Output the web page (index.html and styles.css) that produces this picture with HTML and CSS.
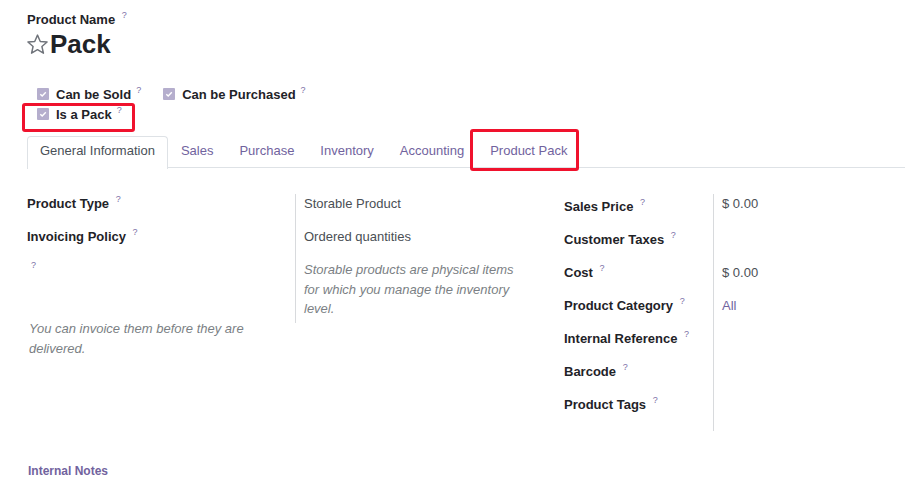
FILE: index.html
```html
<!DOCTYPE html>
<html>
<head>
<meta charset="utf-8">
<link rel="stylesheet" href="styles.css">
</head>
<body>
<div class="sheet">
  <div class="title-block">
    <div class="name-label">Product Name <sup class="q">?</sup></div>
    <h1 class="name">
      <svg class="star" viewBox="0 0 24 24" width="23" height="23"><path d="M12 2.2l2.9 6.6 7.1.6-5.4 4.7 1.6 7-6.2-3.7-6.2 3.7 1.6-7L2 9.4l7.1-.6z" fill="none" stroke="#6f737a" stroke-width="1.5" stroke-linejoin="round"/></svg>Pack
    </h1>
  </div>

  <div class="options">
    <div class="opt-row">
      <label class="opt"><span class="cb"><svg viewBox="0 0 12 12" width="12" height="12"><path d="M3.3 6.2l1.9 1.9 3.6-3.8" fill="none" stroke="#fff" stroke-width="1.4"/></svg></span>Can be Sold <sup class="q">?</sup></label>
      <label class="opt"><span class="cb"><svg viewBox="0 0 12 12" width="12" height="12"><path d="M3.3 6.2l1.9 1.9 3.6-3.8" fill="none" stroke="#fff" stroke-width="1.4"/></svg></span>Can be Purchased <sup class="q">?</sup></label>
    </div>
    <div class="opt-row">
      <label class="opt"><span class="cb"><svg viewBox="0 0 12 12" width="12" height="12"><path d="M3.3 6.2l1.9 1.9 3.6-3.8" fill="none" stroke="#fff" stroke-width="1.4"/></svg></span>Is a Pack <sup class="q">?</sup></label>
    </div>
  </div>

  <div class="tabs">
    <div class="tab active">General Information</div>
    <div class="tab">Sales</div>
    <div class="tab">Purchase</div>
    <div class="tab">Inventory</div>
    <div class="tab">Accounting</div>
    <div class="tab">Product Pack</div>
  </div>

  <div class="groups">
    <div class="group-left">
      <div class="grid left-grid">
        <div class="lbl">Product Type <sup class="q">?</sup></div>
        <div class="val">Storable Product</div>
        <div class="lbl">Invoicing Policy <sup class="q">?</sup></div>
        <div class="val">Ordered quantities</div>
        <div class="lbl empty"><sup class="q">?</sup></div>
        <div class="val help">Storable products are physical items for which you manage the inventory level.</div>
      </div>
      <div class="help below">You can invoice them before they are delivered.</div>
    </div>
    <div class="group-right">
      <div class="grid right-grid">
        <div class="lbl">Sales Price <sup class="q">?</sup></div>
        <div class="val first">$ 0.00</div>
        <div class="lbl">Customer Taxes <sup class="q">?</sup></div>
        <div class="val"></div>
        <div class="lbl">Cost <sup class="q">?</sup></div>
        <div class="val">$ 0.00</div>
        <div class="lbl">Product Category <sup class="q">?</sup></div>
        <div class="val link">All</div>
        <div class="lbl">Internal Reference <sup class="q">?</sup></div>
        <div class="val"></div>
        <div class="lbl">Barcode <sup class="q">?</sup></div>
        <div class="val"></div>
        <div class="lbl">Product Tags <sup class="q">?</sup></div>
        <div class="val last"></div>
      </div>
    </div>
  </div>

  <div class="notes">Internal Notes</div>

  <div class="mark mark-pack"></div>
  <div class="mark mark-tab"></div>
</div>
</body>
</html>
```

FILE: styles.css
```css
* { box-sizing: border-box; }
html, body { margin: 0; padding: 0; background: #fff; }
body {
  font-family: "Liberation Sans", Arial, sans-serif;
  font-size: 13px;
  color: #212529;
  width: 905px;
  height: 481px;
  overflow: hidden;
}
.sheet {
  position: relative;
  padding: 11px 0 0 27px;
}
.q {
  font-size: 9px;
  font-weight: 400;
  color: #7b6fa6;
  vertical-align: top;
  position: relative;
  top: -5px;
  margin-left: 3px;
}
.name-label {
  font-weight: 700;
  font-size: 13px;
  line-height: 18px;
  color: #1f2328;
}
.name {
  margin: 0;
  font-size: 26px;
  font-weight: 700;
  line-height: 30px;
  display: flex;
  align-items: center;
  color: #1f2328;
}
.star { margin-right: 1px; margin-left: -1px; }

.options {
  margin-top: 25px;
  padding-left: 10px;
}
.opt-row {
  display: flex;
  gap: 22px;
  height: 20px;
  align-items: center;
}
.opt {
  display: flex;
  align-items: center;
  font-weight: 700;
  color: #1f2328;
}
.opt .q { top: -4px; margin-left: 5px; }
.cb {
  width: 12px;
  height: 12px;
  background: #b5aecd;
  border-radius: 1px;
  margin-right: 7px;
  display: inline-flex;
}

.tabs {
  display: flex;
  margin-top: 12px;
  border-bottom: 1px solid #dee2e6;
  height: 32px;
}
.tab {
  padding: 4px 12px 8px;
  line-height: 19px;
  color: #71639e;
  border: 1px solid transparent;
  border-bottom: none;
}
.tab.active {
  color: #495057;
  background: #fff;
  border-color: #dee2e6;
  border-top-left-radius: 4px;
  border-top-right-radius: 4px;
  margin-bottom: -1px;
  height: 33px;
}

.groups {
  display: flex;
  margin-top: 26px;
}
.group-left { width: 537px; }
.group-right { flex: 1; }
.grid {
  display: grid;
  grid-auto-rows: minmax(33px, auto);
}
.left-grid { grid-template-columns: 268px 1fr; }
.right-grid { grid-template-columns: 149px 1fr; }
.lbl {
  font-weight: 700;
  line-height: 20px;
  color: #1f2328;
}
.lbl.empty { padding-left: 1px; padding-top: 0; }
.right-grid .lbl { padding-top: 3px; }
.val {
  border-left: 1px solid #d8dadd;
  padding-left: 8px;
  line-height: 20px;
  color: #4a4f55;
}
.right-grid .val { padding-top: 3px; }
.right-grid .val.first { padding-top: 0; }
.val.last { min-height: 39px; }
.val.link { color: #71639e; }
.help {
  font-style: italic;
  color: #7b7f84;
  line-height: 19.5px;
  padding-right: 20px;
}
.left-grid .help { padding-right: 45px; padding-bottom: 4px; }
.below {
  width: 240px;
  padding: 0 0 0 2px;
  margin-top: -4px;
  line-height: 20px;
}
.notes {
  margin-top: 33px;
  margin-left: 1px;
  font-size: 12px;
  font-weight: 700;
  color: #71639e;
}

.mark {
  position: absolute;
  border: 3px solid #f0122d;
  border-radius: 3px;
}
.mark-pack { left: 22px; top: 103px; width: 113px; height: 29px; }
.mark-tab { left: 470px; top: 129px; width: 109px; height: 42px; }
```
